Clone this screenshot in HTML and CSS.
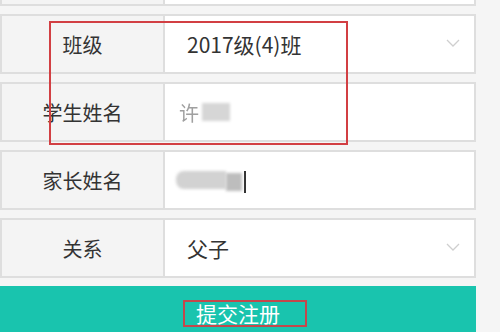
FILE: index.html
```html
<!DOCTYPE html>
<html lang="zh">
<head>
<meta charset="utf-8">
<link rel="stylesheet" href="styles.css">
</head>
<body>
<div class="form">
  <div class="row row-cut"><div class="label"></div><div class="value"></div></div>
  <div class="row">
    <div class="label">班级</div>
    <div class="value select"><span>2017级(4)班</span>
      <svg class="chev" width="14" height="8" viewBox="0 0 14 8"><polyline points="1,1 7,7 13,1" fill="none" stroke="#cfcfcf" stroke-width="1.3"/></svg>
    </div>
  </div>
  <div class="row">
    <div class="label">学生姓名</div>
    <div class="value"><span class="faint">许</span><span class="blur b1"></span></div>
  </div>
  <div class="row">
    <div class="label">家长姓名</div>
    <div class="value"><span class="blur b2"></span><span class="blur b3"></span><span class="caret"></span></div>
  </div>
  <div class="row">
    <div class="label">关系</div>
    <div class="value select"><span>父子</span>
      <svg class="chev" width="14" height="8" viewBox="0 0 14 8"><polyline points="1,1 7,7 13,1" fill="none" stroke="#cfcfcf" stroke-width="1.3"/></svg>
    </div>
  </div>
  <div class="submit"><span class="submit-text">提交注册</span></div>
  <div class="mark"></div>
</div>
</body>
</html>
```

FILE: styles.css
```css
html, body {
  margin: 0;
  padding: 0;
  background: #f5f5f5;
  font-family: "Noto Sans CJK SC", "Noto Sans", sans-serif;
  color: #333;
}
.form {
  position: relative;
  width: 476px;
  height: 332px;
  overflow: hidden;
}
.row {
  display: flex;
  height: 60px;
  box-sizing: border-box;
  border: 2px solid #dedede;
  margin-top: 8px;
}
.row-cut {
  height: 6px;
  margin-top: 0;
  border-top: none;
}
.label {
  width: 161px;
  flex: none;
  background: #f4f4f4;
  border-right: 2px solid #dedede;
  display: flex;
  align-items: center;
  justify-content: center;
  font-size: 20px;
  color: #333;
}
.value {
  flex: 1;
  background: #fff;
  display: flex;
  align-items: center;
  padding-left: 22px;
  font-size: 21px;
  color: #333;
}
.select {
  justify-content: space-between;
  padding-right: 14px;
}
.chev {
  margin-top: -3px;
}
.faint {
  color: #a0a0a0;
  font-size: 20px;
  margin-left: -8px;
  filter: blur(0.4px);
}
.blur {
  display: inline-block;
  height: 18px;
  background: #d4d4d4;
  filter: blur(1.5px);
}
.b1 {
  width: 28px;
  margin-left: 3px;
  background: #d6d6d6;
}
.b2 {
  width: 50px;
  margin-left: -11px;
  background: #d2d2d2;
  border-radius: 8px 0 0 8px;
}
.b3 {
  width: 16px;
  margin-top: 4px;
  background: #bdbdbd;
}
.caret {
  display: inline-block;
  width: 2px;
  height: 22px;
  background: #333;
  margin-left: 2px;
  margin-top: 3px;
}
.submit {
  margin-top: 8px;
  height: 52px;
  background: #19c4ae;
  display: flex;
  align-items: center;
  justify-content: center;
}
.submit-text {
  color: #fff;
  font-size: 21px;
  line-height: 23px;
  border: 2px solid #c4484c;
  padding: 0 25px 0 11px;
  margin-left: 14px;
  margin-top: 2px;
}
.mark {
  position: absolute;
  left: 49px;
  top: 21px;
  width: 299px;
  height: 124px;
  box-sizing: border-box;
  border: 2px solid #d23f43;
}
```
